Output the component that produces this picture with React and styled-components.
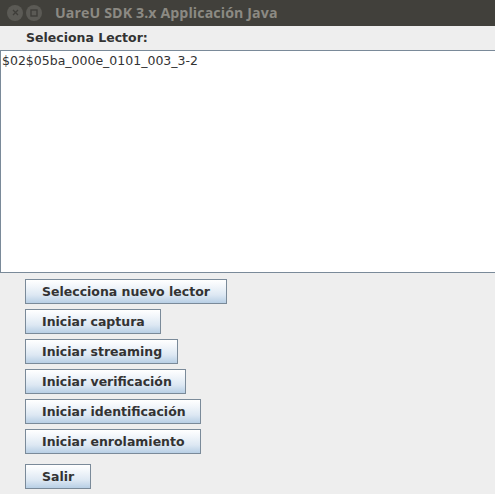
import React from 'react';
import styled, { createGlobalStyle } from 'styled-components';

const GlobalStyle = createGlobalStyle`
	html, body {
		margin: 0;
		padding: 0;
		background: #eeeeee;
	}
`;

const Window = styled.div`
	width: 495px;
	height: 494px;
	display: flex;
	flex-direction: column;
	background: #eeeeee;
	font-family: 'DejaVu Sans', sans-serif;
	overflow: hidden;
`;

const TitleBar = styled.div`
	height: 26px;
	background: #41403b;
	display: flex;
	align-items: center;
	padding-left: 7px;
	gap: 3px;
`;

const WinButton = styled.div`
	width: 16px;
	height: 16px;
	border-radius: 50%;
	background: #5b5a55;
	display: flex;
	align-items: center;
	justify-content: center;
`;

const TitleText = styled.span`
	color: #8c8a83;
	font-family: 'Open Sans', sans-serif;
	font-weight: 700;
	font-size: 14.2px;
	margin-left: 10px;
	letter-spacing: 0.1px;
`;

const Label = styled.div`
	height: 25px;
	padding-left: 26px;
	display: flex;
	align-items: center;
	font-weight: 700;
	font-size: 12.5px;
	color: #333333;
`;

const ListArea = styled.div`
	height: 220px;
	background: #ffffff;
	border-top: 1px solid #7a8a99;
	border-bottom: 1px solid #7a8a99;
	border-left: 1px solid #7a8a99;
	padding: 2px 1px;
	font-size: 12.5px;
	color: #333333;
	box-sizing: content-box;
`;

const Buttons = styled.div`
	display: flex;
	flex-direction: column;
	align-items: flex-start;
	padding: 6px 0 0 25px;
`;

const Button = styled.button`
	height: 25px;
	width: ${(p) => p.w}px;
	margin-top: ${(p) => p.mt || 0}px;
	margin-bottom: 5px;
	padding: 0 0 0 16px;
	text-align: left;
	border: 1px solid #7a8a99;
	border-radius: 0;
	background: linear-gradient(to bottom, #ffffff 0%, #f3f7fb 25%, #dde8f3 65%, #b8cfe5 100%);
	font-family: 'DejaVu Sans', sans-serif;
	font-weight: 700;
	font-size: 12.5px;
	color: #333333;
	box-sizing: border-box;
`;

const App = () => {
	return (
		<>
			<GlobalStyle />
			<Window>
				<TitleBar>
					<WinButton>
						<svg width="7" height="7" viewBox="0 0 7 7">
							<path d="M1 1L6 6M6 1L1 6" stroke="#3e3d39" strokeWidth="1.3" />
						</svg>
					</WinButton>
					<WinButton>
						<svg width="8" height="8" viewBox="0 0 8 8">
							<rect x="1" y="1" width="6" height="6" fill="none" stroke="#3e3d39" strokeWidth="1.4" />
						</svg>
					</WinButton>
					<TitleText>UareU SDK 3.x Applicación Java</TitleText>
				</TitleBar>
				<Label>Seleciona Lector:</Label>
				<ListArea>$02$05ba_000e_0101_003_3-2</ListArea>
				<Buttons>
					<Button w={202}>Selecciona nuevo lector</Button>
					<Button w={136}>Iniciar captura</Button>
					<Button w={153}>Iniciar streaming</Button>
					<Button w={161}>Iniciar verificación</Button>
					<Button w={176}>Iniciar identificación</Button>
					<Button w={176}>Iniciar enrolamiento</Button>
					<Button w={66} mt={5}>Salir</Button>
				</Buttons>
			</Window>
		</>
	);
};

export default App;
